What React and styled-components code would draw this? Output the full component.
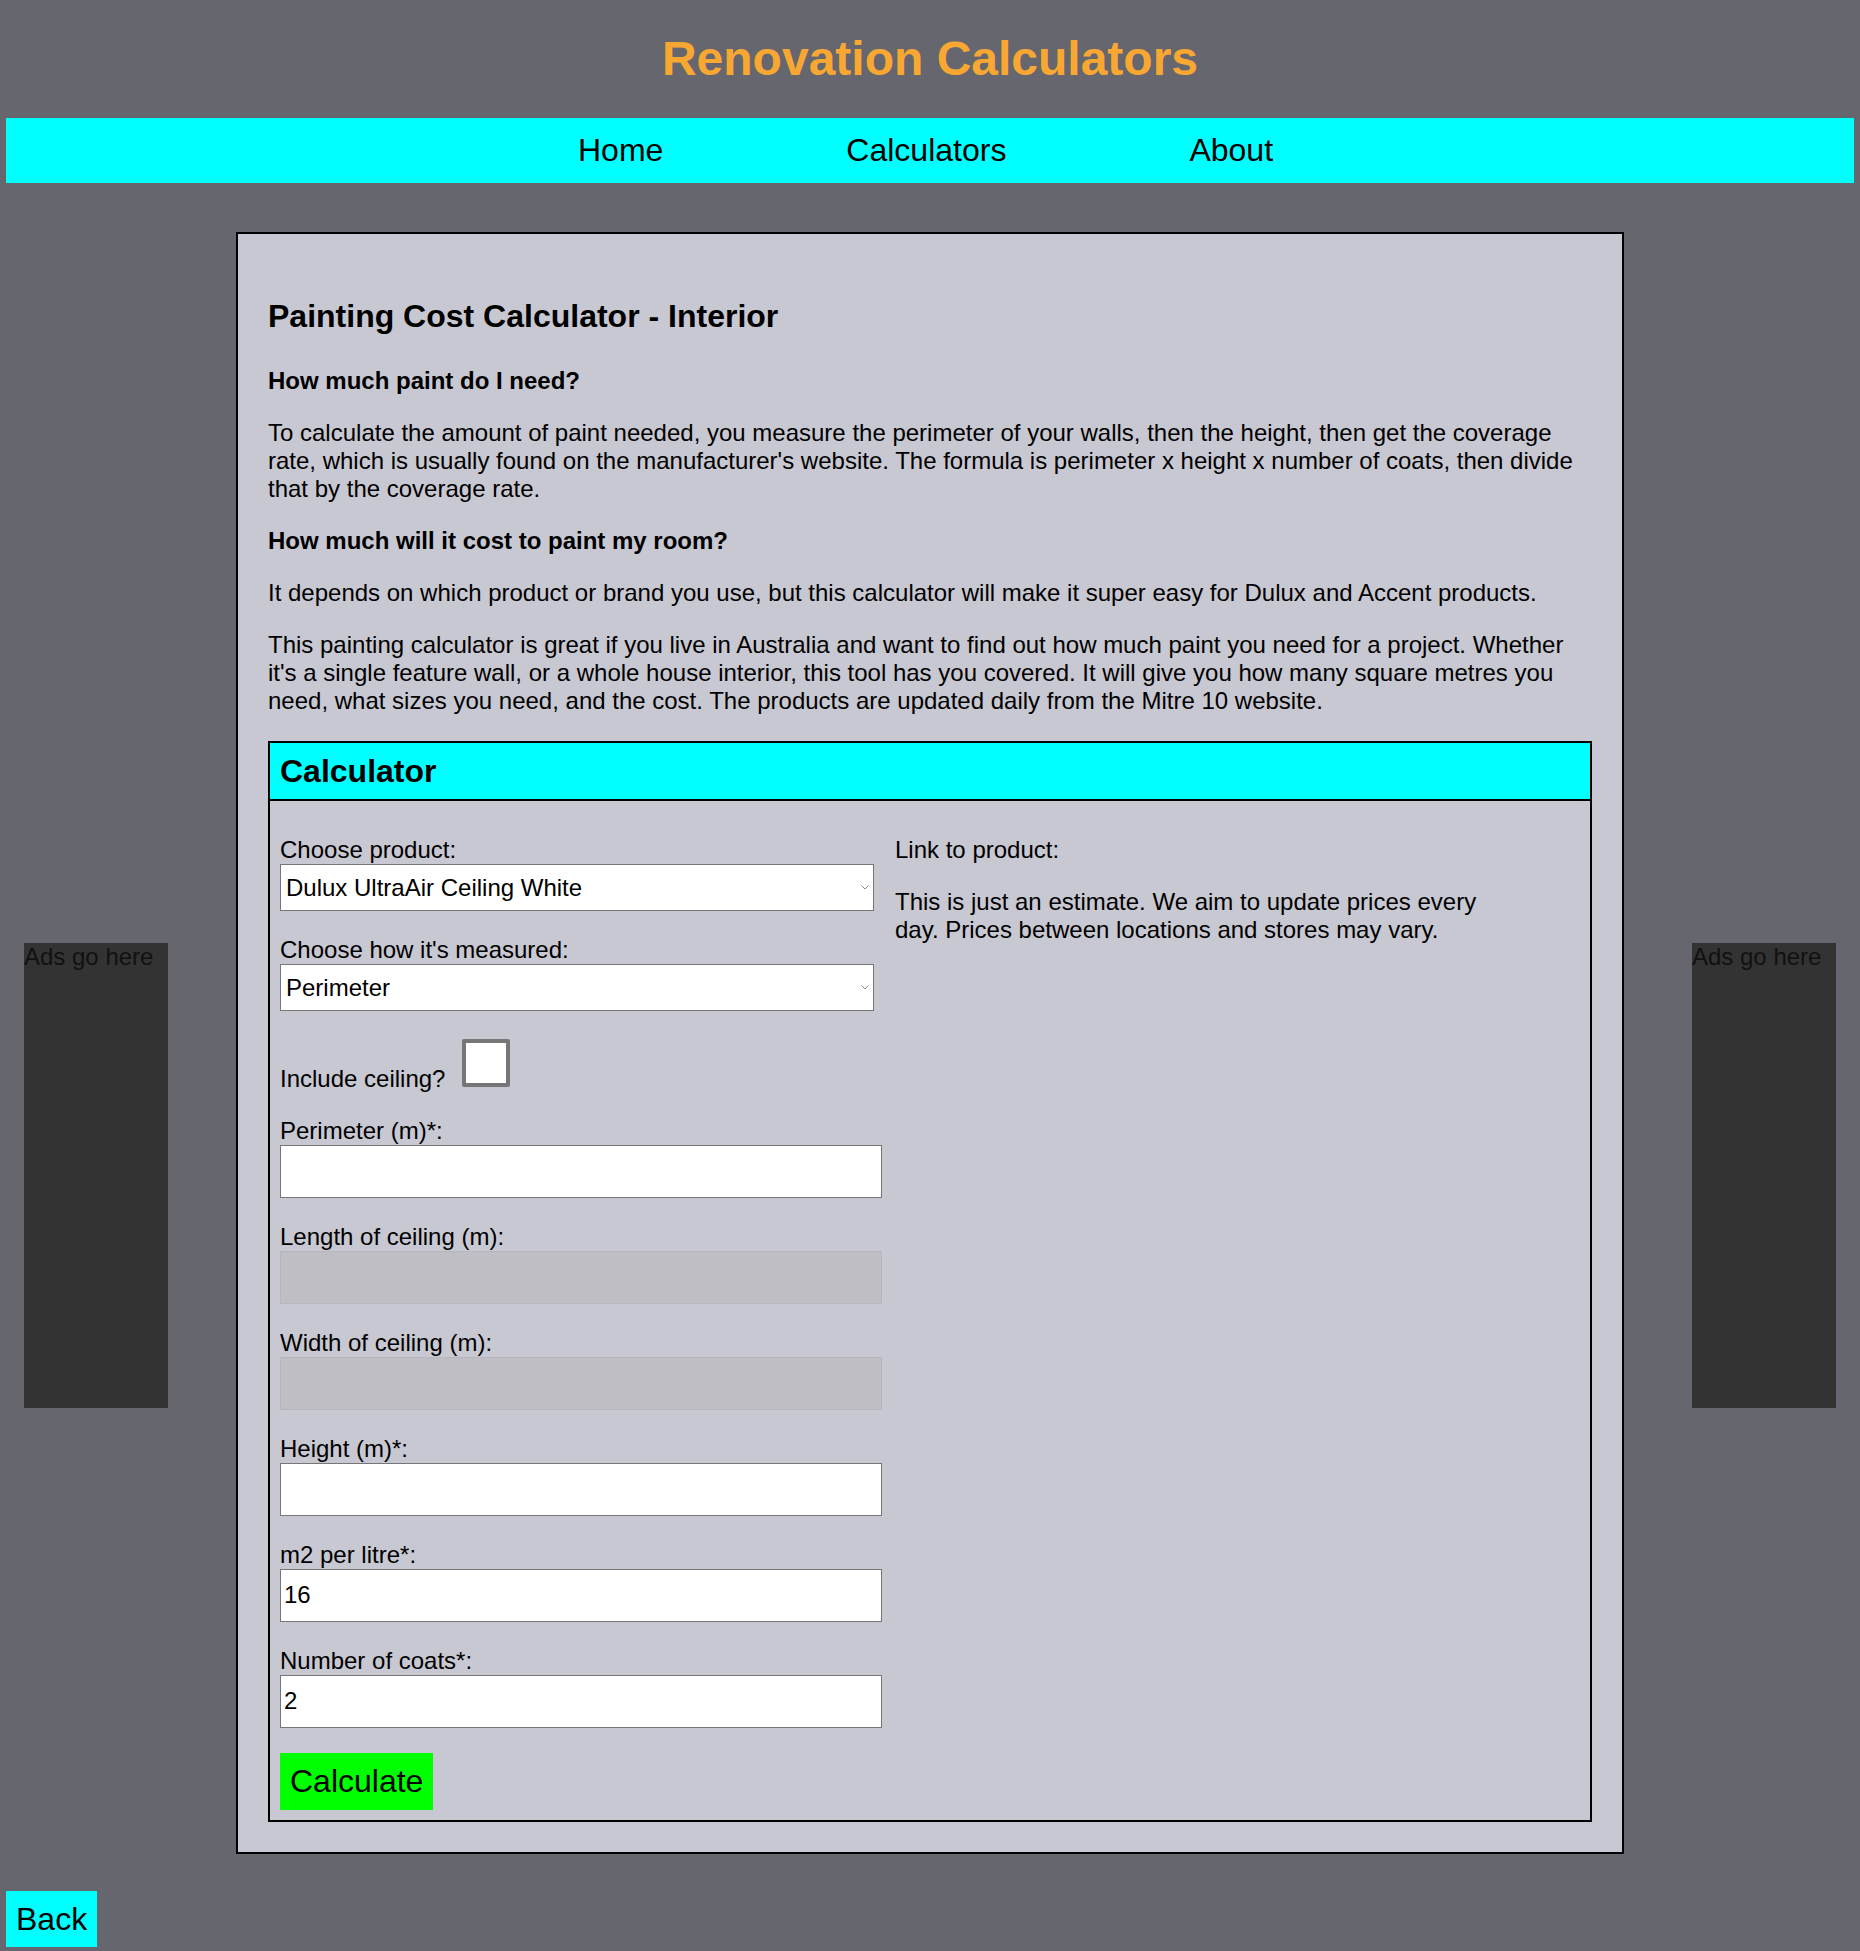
import React from 'react'
import styled, { createGlobalStyle } from 'styled-components'

const GlobalStyle = createGlobalStyle`
  body {
    margin: 6px;
    background-color: #66666f;
    font-family: "Liberation Sans", Arial, sans-serif;
    color: #000;
  }
`

const SiteTitle = styled.h1`
  margin: 25px 0 32px;
  text-align: center;
  font-size: 48px;
  font-weight: 700;
  color: #f8a832;
`

const NavBar = styled.nav`
  display: flex;
  justify-content: center;
  padding: 14px 9px 14px 0;
  background-color: #00ffff;
`

const NavLink = styled.a`
  padding: 0 91.5px;
  font-size: 32px;
  color: #000;
  text-decoration: none;
`

const Layout = styled.div`
  display: flex;
  justify-content: space-between;
  align-items: flex-start;
  margin-top: 49px;
  padding: 0 18px;
`

const AdSlot = styled.aside`
  width: 144px;
  height: 465px;
  margin-top: 711px;
  background-color: #333333;
  color: #111;
  font-size: 24px;
`

const MainCard = styled.main`
  box-sizing: border-box;
  width: 1388px;
  padding: 40px 30px 30px;
  border: 2px solid #000;
  background-color: #c8c8d2;
`

const PageHeading = styled.h1`
  margin: 23.5px 0 32px;
  font-size: 32px;
  font-weight: 700;
`

const SubHeading = styled.h3`
  margin: 24px 0;
  font-size: 24px;
  font-weight: 700;
`

const Paragraph = styled.p`
  margin: 24px 0;
  font-size: 24px;
`

const CalculatorPanel = styled.section`
  margin-top: 26px;
  border: 2px solid #000;
`

const PanelHeader = styled.h2`
  margin: 0;
  height: 56px;
  padding: 0 10px;
  line-height: 56px;
  font-size: 32px;
  font-weight: 700;
  background-color: #00ffff;
  border-bottom: 2px solid #000;
`

const PanelBody = styled.div`
  display: flex;
  gap: 13px;
  padding: 10px;
`

const FormColumn = styled.form`
  width: 602px;
  margin: 0;
`

const InfoColumn = styled.div`
  width: 600px;
  font-size: 24px;
`

const InfoLine = styled.p`
  margin: ${(p) => (p.$first ? '25px' : '24px')} 0 0;
  line-height: ${(p) => (p.$first ? '28px' : 'normal')};
`

const FieldLabel = styled.label`
  display: block;
  margin-top: ${(p) => p.$gap || 25}px;
  font-size: 24px;
  line-height: 28px;
`

const SelectWrap = styled.div`
  position: relative;
  width: 594px;
`

const Select = styled.select`
  display: block;
  box-sizing: border-box;
  width: 100%;
  height: 47px;
  padding: 0 30px 0 5px;
  appearance: none;
  font-family: inherit;
  font-size: 24px;
  color: #000;
  background-color: #fff;
  border: 1px solid #767676;
  border-radius: 0;
`

const Chevron = styled.svg`
  position: absolute;
  right: 5px;
  top: 50%;
  width: 8px;
  height: 5px;
  margin-top: -2px;
  pointer-events: none;
`

const TextInput = styled.input`
  display: block;
  box-sizing: border-box;
  width: 100%;
  height: 53px;
  padding: 1px 3px;
  font-family: inherit;
  font-size: 24px;
  color: #000;
  background-color: ${(p) => (p.disabled ? '#bfbec5' : '#fff')};
  border: 1px solid ${(p) => (p.disabled ? '#b6b6bc' : '#767676')};
  border-radius: 0;
  outline: none;
`

const CheckRow = styled.div`
  display: flex;
  align-items: flex-end;
  margin-top: 28px;
  font-size: 24px;
`

const CheckText = styled.span`
  margin-bottom: -6px;
`

const CheckBox = styled.input`
  appearance: none;
  box-sizing: border-box;
  width: 48px;
  height: 48px;
  margin: 0 0 0 17px;
  background-color: #fff;
  border: 4px solid #767676;
  border-radius: 2px;
`

const CalcButton = styled.button`
  display: block;
  margin-top: 25px;
  padding: 10px;
  font-family: inherit;
  font-size: 32px;
  line-height: 37px;
  color: #000;
  background-color: #00ff00;
  border: none;
  border-radius: 0;
`

const BackButton = styled.a`
  display: inline-block;
  margin-top: 37px;
  padding: 9px 10px;
  font-size: 32px;
  line-height: 38px;
  color: #000;
  text-decoration: none;
  background-color: #00ffff;
`

const fields = [
  { id: 'length', label: 'Length of ceiling (m):', disabled: true },
  { id: 'width', label: 'Width of ceiling (m):', disabled: true },
  { id: 'height', label: 'Height (m)*:' },
  { id: 'coverage', label: 'm2 per litre*:', value: '16' },
  { id: 'coats', label: 'Number of coats*:', value: '2' },
]

function Dropdown({ id, value, label }) {
  return (
    <SelectWrap>
      <Select id={id} defaultValue={value}>
        <option value={value}>{label}</option>
      </Select>
      <Chevron viewBox="0 0 8 5">
        <path d="M0.5 0.5 L4 4 L7.5 0.5" fill="none" stroke="#8a8a8a" strokeWidth="1" />
      </Chevron>
    </SelectWrap>
  )
}

export default function App() {
  return (
    <React.Fragment>
      <GlobalStyle />
      <SiteTitle>Renovation Calculators</SiteTitle>
      <NavBar>
        <NavLink href="#">Home</NavLink>
        <NavLink href="#">Calculators</NavLink>
        <NavLink href="#">About</NavLink>
      </NavBar>

      <Layout>
        <AdSlot>Ads go here</AdSlot>
        <MainCard>
          <PageHeading>Painting Cost Calculator - Interior</PageHeading>
          <SubHeading>How much paint do I need?</SubHeading>
          <Paragraph>
            To calculate the amount of paint needed, you measure the perimeter
            of your walls, then the height, then get the coverage rate, which
            is usually found on the manufacturer's website. The formula is
            perimeter x height x number of coats, then divide that by the
            coverage rate.
          </Paragraph>
          <SubHeading>How much will it cost to paint my room?</SubHeading>
          <Paragraph>
            It depends on which product or brand you use, but this calculator
            will make it super easy for Dulux and Accent products.
          </Paragraph>
          <Paragraph>
            This painting calculator is great if you live in Australia and want
            to find out how much paint you need for a project. Whether it's a
            single feature wall, or a whole house interior, this tool has you
            covered. It will give you how many square metres you need, what
            sizes you need, and the cost. The products are updated daily from
            the Mitre 10 website.
          </Paragraph>

          <CalculatorPanel>
            <PanelHeader>Calculator</PanelHeader>
            <PanelBody>
              <FormColumn onSubmit={(e) => e.preventDefault()}>
                <FieldLabel htmlFor="product">Choose product:</FieldLabel>
                <Dropdown id="product" value="ultraair" label="Dulux UltraAir Ceiling White" />
                <FieldLabel htmlFor="measure">Choose how it's measured:</FieldLabel>
                <Dropdown id="measure" value="perimeter" label="Perimeter" />
                <CheckRow>
                  <CheckText>Include ceiling?</CheckText>
                  <CheckBox type="checkbox" />
                </CheckRow>
                <FieldLabel htmlFor="perimeter" $gap={30}>
                  Perimeter (m)*:
                </FieldLabel>
                <TextInput id="perimeter" type="text" />
                {fields.map(({ id, label, disabled, value }) => (
                  <React.Fragment key={id}>
                    <FieldLabel htmlFor={id}>{label}</FieldLabel>
                    <TextInput
                      id={id}
                      type="text"
                      disabled={disabled}
                      defaultValue={value}
                    />
                  </React.Fragment>
                ))}
                <CalcButton type="submit">Calculate</CalcButton>
              </FormColumn>
              <InfoColumn>
                <InfoLine $first>Link to product:</InfoLine>
                <InfoLine>
                  This is just an estimate. We aim to update prices every day.
                  Prices between locations and stores may vary.
                </InfoLine>
              </InfoColumn>
            </PanelBody>
          </CalculatorPanel>
        </MainCard>
        <AdSlot>Ads go here</AdSlot>
      </Layout>

      <BackButton href="#">Back</BackButton>
    </React.Fragment>
  )
}
